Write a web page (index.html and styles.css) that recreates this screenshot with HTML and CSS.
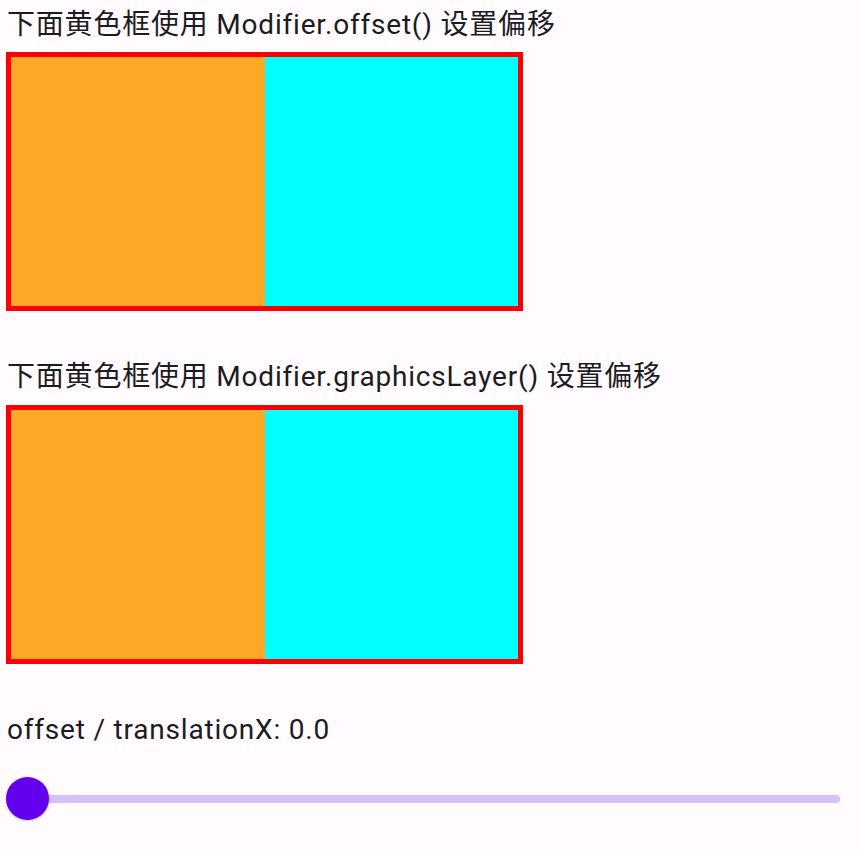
FILE: index.html
```html
<!DOCTYPE html>
<html lang="zh-CN">
<head>
    <meta charset="UTF-8">
    <meta name="viewport" content="width=device-width, initial-scale=1.0">
    <title>Offset vs GraphicsLayer</title>
    <link rel="stylesheet" href="styles.css">
</head>
<body>
    <div class="screen">
        <p class="label first">下面黄色框使用 Modifier.offset() 设置偏移</p>
        <div class="frame">
            <div class="half yellow"></div>
            <div class="half cyan"></div>
        </div>

        <p class="label">下面黄色框使用 Modifier.graphicsLayer() 设置偏移</p>
        <div class="frame">
            <div class="half yellow"></div>
            <div class="half cyan"></div>
        </div>

        <p class="label value">offset / translationX: 0.0</p>
        <div class="slider">
            <div class="track"></div>
            <div class="thumb"></div>
        </div>
    </div>
</body>
</html>
```

FILE: styles.css
```css
body {
    margin: 0;
    padding: 0;
    background-color: #fffbfe;
    color: #1c1b1f;
    font-family: Roboto, "Noto Sans CJK SC", sans-serif;
}
.screen {
    padding: 0 6px;
    display: flex;
    flex-direction: column;
}
.label {
    margin: 50px 0 12px 1px;
    font-size: 28px;
    line-height: 32px;
    letter-spacing: 0.8px;
}
.label.first {
    margin-top: 9px;
    margin-bottom: 11px;
}
.frame {
    width: 507px;
    height: 249px;
    border: 5px solid #ff0000;
    display: flex;
}
.half {
    flex: 1;
}
.yellow {
    background-color: #ffa726;
    flex: 0 0 254px;
}
.cyan {
    background-color: #00ffff;
}
.label.value {
    margin-bottom: 31px;
}
.slider {
    position: relative;
    height: 44px;
    width: 834px;
}
.track {
    position: absolute;
    left: 20px;
    right: 0;
    top: 18px;
    height: 8px;
    border-radius: 4px;
    background-color: #d7bff8;
}
.thumb {
    position: absolute;
    left: 0;
    top: 0;
    width: 43px;
    height: 43px;
    border-radius: 50%;
    background-color: #6200ee;
    box-shadow: 0 1px 3px rgba(0, 0, 0, 0.25);
}
```
